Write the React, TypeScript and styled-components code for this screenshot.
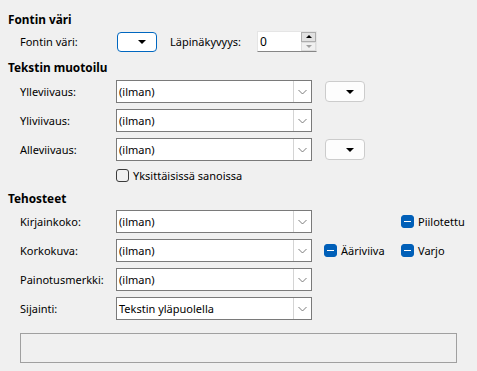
import styled, { createGlobalStyle } from "styled-components";

const GlobalStyle = createGlobalStyle`
  html, body {
    margin: 0;
    padding: 0;
    background: #f0f0f0;
  }
  body {
    font-family: "Noto Sans", "Open Sans", sans-serif;
    font-size: 11px;
    color: #000;
  }
`;

const Page = styled.div`
  width: 477px;
  height: 371px;
  box-sizing: border-box;
  padding: 11px 0 0 8px;
  display: flex;
  flex-direction: column;
  overflow: hidden;
`;

const Heading = styled.div<{ $top: number }>`
  margin-top: ${(p) => p.$top}px;
  height: 16px;
  line-height: 16px;
  font-size: 11.8px;
  font-weight: 700;
`;

const Rows = styled.div<{ $top: number }>`
  margin-top: ${(p) => p.$top}px;
  display: flex;
  flex-direction: column;
  gap: 6px;
`;

const Row = styled.div<{ $h?: number }>`
  display: flex;
  align-items: center;
  height: ${(p) => p.$h ?? 23}px;
  padding-left: 12px;
`;

const Label = styled.span<{ $w?: number; $left?: number }>`
  width: ${(p) => p.$w ?? 96}px;
  margin-left: ${(p) => p.$left ?? 0}px;
  flex: none;
  white-space: nowrap;
`;

const ColorButton = styled.div<{ $focused?: boolean }>`
  box-sizing: border-box;
  width: 40px;
  height: ${(p) => (p.$focused ? 20 : 21)}px;
  margin-left: ${(p) => (p.$focused ? 1 : 13)}px;
  border: 1px solid ${(p) => (p.$focused ? "#0067c0" : "#cccccc")};
  border-radius: 4px;
  background: ${(p) => (p.$focused ? "#ffffff" : "#fdfdfd")};
  display: flex;
  align-items: center;
  justify-content: flex-end;
  padding-right: 10px;
`;

const Triangle = styled.span`
  width: 0;
  height: 0;
  border-left: 4px solid transparent;
  border-right: 4px solid transparent;
  border-top: 4px solid #000;
`;

const SpinBox = styled.div`
  box-sizing: border-box;
  width: 60px;
  height: 21px;
  background: #fff;
  border: 1px solid #e5e5e5;
  border-bottom: 1px solid #868686;
  display: flex;
  align-items: center;
`;

const SpinValue = styled.span`
  flex: 1;
  padding-left: 2px;
  font-size: 12px;
`;

const SpinButtons = styled.div`
  width: 15px;
  height: 19px;
  display: flex;
  flex-direction: column;
  background: #f0f0f0;
`;

const SpinButton = styled.div<{ $enabled?: boolean }>`
  flex: 1;
  box-sizing: border-box;
  border: 1px solid ${(p) => (p.$enabled ? "#adadad" : "#dcdcdc")};
  background: ${(p) => (p.$enabled ? "#e1e1e1" : "#f0f0f0")};
  display: flex;
  align-items: center;
  justify-content: center;
`;

const SpinArrow = styled.span<{ $up?: boolean; $enabled?: boolean }>`
  width: 0;
  height: 0;
  border-left: 3px solid transparent;
  border-right: 3px solid transparent;
  ${(p) =>
    p.$up
      ? `border-bottom: 3px solid ${p.$enabled ? "#000" : "#a0a0a0"};`
      : `border-top: 3px solid ${p.$enabled ? "#000" : "#a0a0a0"};`}
`;

const Combo = styled.div`
  box-sizing: border-box;
  width: 196px;
  height: 23px;
  flex: none;
  border: 1px solid #7a7a7a;
  background: #fff;
  display: flex;
  align-items: center;
`;

const ComboText = styled.span`
  flex: 1;
  padding-left: 2px;
  white-space: nowrap;
`;

const ComboButton = styled.div`
  box-sizing: border-box;
  width: 18px;
  height: 21px;
  border-left: 1px solid #d4d4d4;
  display: flex;
  align-items: center;
  justify-content: center;
`;

const Check = styled.span<{ $on?: boolean }>`
  box-sizing: border-box;
  width: 13px;
  height: 13px;
  flex: none;
  border-radius: 3px;
  border: 1px solid ${(p) => (p.$on ? "#005fb8" : "#3b3b3b")};
  background: ${(p) => (p.$on ? "#005fb8" : "transparent")};
  display: flex;
  align-items: center;
  justify-content: center;
  &::after {
    content: "";
    display: ${(p) => (p.$on ? "block" : "none")};
    width: 7px;
    height: 1.5px;
    background: #fff;
  }
`;

const CheckItem = styled.div<{ $w?: number; $left?: number }>`
  display: flex;
  align-items: center;
  gap: 4px;
  width: ${(p) => (p.$w ? `${p.$w}px` : "auto")};
  margin-left: ${(p) => p.$left ?? 0}px;
  white-space: nowrap;
`;

const Preview = styled.div`
  margin: 13px 0 0 12px;
  width: 437px;
  height: 30px;
  box-sizing: border-box;
  border: 1px solid #a0a0a0;
`;

const Chevron = () => (
  <svg width="9" height="6" viewBox="0 0 9 6">
    <polyline points="0.5,1 4.5,5 8.5,1" fill="none" stroke="#6d6d6d" strokeWidth="0.9" />
  </svg>
);

const ComboBox = ({ value }: { value: string }) => (
  <Combo>
    <ComboText>{value}</ComboText>
    <ComboButton>
      <Chevron />
    </ComboButton>
  </Combo>
);

export default function App() {
  return (
    <Page>
      <GlobalStyle />
      <Heading $top={0}>Fontin väri</Heading>
      <Rows $top={4}>
        <Row $h={21}>
          <Label>Fontin väri:</Label>
          <ColorButton $focused>
            <Triangle />
          </ColorButton>
          <Label $w={87} $left={13}>Läpinäkyvyys:</Label>
          <SpinBox>
            <SpinValue>0</SpinValue>
            <SpinButtons>
              <SpinButton $enabled>
                <SpinArrow $up $enabled />
              </SpinButton>
              <SpinButton>
                <SpinArrow />
              </SpinButton>
            </SpinButtons>
          </SpinBox>
        </Row>
      </Rows>

      <Heading $top={7}>Tekstin muotoilu</Heading>
      <Rows $top={5}>
        <Row>
          <Label>Ylleviivaus:</Label>
          <ComboBox value="(ilman)" />
          <ColorButton>
            <Triangle />
          </ColorButton>
        </Row>
        <Row>
          <Label>Yliviivaus:</Label>
          <ComboBox value="(ilman)" />
        </Row>
        <Row>
          <Label>Alleviivaus:</Label>
          <ComboBox value="(ilman)" />
          <ColorButton>
            <Triangle />
          </ColorButton>
        </Row>
      </Rows>
      <Rows $top={7}>
        <Row $h={14}>
          <Label />
          <CheckItem>
            <Check />
            <span>Yksittäisissä sanoissa</span>
          </CheckItem>
        </Row>
      </Rows>

      <Heading $top={8}>Tehosteet</Heading>
      <Rows $top={4}>
        <Row>
          <Label>Kirjainkoko:</Label>
          <ComboBox value="(ilman)" />
          <CheckItem $left={89}>
            <Check $on />
            <span>Piilotettu</span>
          </CheckItem>
        </Row>
        <Row>
          <Label>Korkokuva:</Label>
          <ComboBox value="(ilman)" />
          <CheckItem $w={77} $left={12}>
            <Check $on />
            <span>Ääriviiva</span>
          </CheckItem>
          <CheckItem>
            <Check $on />
            <span>Varjo</span>
          </CheckItem>
        </Row>
        <Row>
          <Label>Painotusmerkki:</Label>
          <ComboBox value="(ilman)" />
        </Row>
        <Row>
          <Label>Sijainti:</Label>
          <ComboBox value="Tekstin yläpuolella" />
        </Row>
      </Rows>
      <Preview />
    </Page>
  );
}
